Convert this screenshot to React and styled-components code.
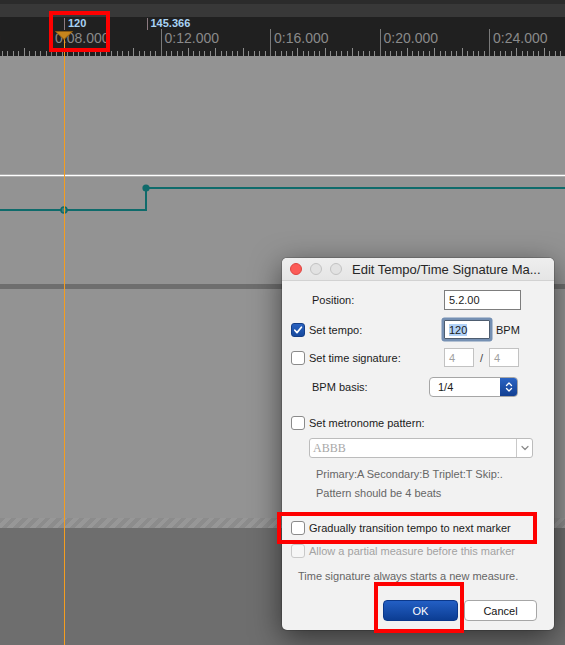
import React from 'react';
import styled, { createGlobalStyle } from 'styled-components';

const Global = createGlobalStyle`
  html, body { margin: 0; padding: 0; background: #6e6e6e; }
  body { font-family: "Liberation Sans", Arial, sans-serif; }
  * { box-sizing: border-box; }
`;

const Screen = styled.div`
  position: relative;
  width: 565px;
  height: 645px;
  overflow: hidden;
  display: flex;
  flex-direction: column;
  background: #6e6e6e;
`;

const TopStrip = styled.div`
  flex: none;
  height: 4px;
  background: #2b2b2b;
`;

const HeaderBar = styled.div`
  flex: none;
  height: 13px;
  background: #383838;
`;

const Ruler = styled.div`
  position: relative;
  flex: none;
  height: 39px;
  background: #202020;
  overflow: hidden;
`;

const RulerTicks = styled.svg`
  position: absolute;
  left: 0;
  top: 0;
`;

const TempoLabel = styled.span`
  position: absolute;
  top: 0;
  line-height: 13px;
  font-size: 11px;
  font-weight: 700;
  color: #a9d3f4;
  white-space: nowrap;
`;

const TimeLabel = styled.span`
  position: absolute;
  top: 14px;
  line-height: 14px;
  font-size: 14px;
  color: #8a8a8a;
  white-space: nowrap;
`;

const Lanes = styled.div`
  flex: 1;
  display: flex;
  flex-direction: column;
`;

const Lane = styled.div`
  position: relative;
  flex: none;
  height: ${p => p.$h}px;
  background: #939393;
`;

const LaneDivider = styled.div`
  flex: none;
  height: 5px;
  background: #6e6e6e;
`;

const Hatch = styled.div`
  flex: none;
  height: 10px;
  background: repeating-linear-gradient(135deg, #8c8c8c 0 4px, #979797 4px 8px);
`;

const BottomArea = styled.div`
  flex: 1;
  background: #6e6e6e;
`;

const Graph = styled.svg`
  position: absolute;
  left: 0;
  top: 0;
`;

const Playhead = styled.div`
  position: absolute;
  left: 63.5px;
  top: 38px;
  bottom: 0;
  width: 1.4px;
  background: #f59d1f;
`;

const PlayheadHandle = styled.svg`
  position: absolute;
  left: 55px;
  top: 31px;
`;

const Dialog = styled.div`
  position: absolute;
  left: 282px;
  top: 258px;
  width: 272px;
  height: 372px;
  background: #f2f2f2;
  border-radius: 5px;
  box-shadow: 0 8px 30px rgba(0, 0, 0, 0.55), 0 0 0 1px rgba(0, 0, 0, 0.15);
  display: flex;
  flex-direction: column;
  overflow: hidden;
  font-family: "Liberation Sans", Arial, sans-serif;
  font-size: 11px;
  color: #1b1b1b;
`;

const TitleBar = styled.div`
  flex: none;
  height: 23px;
  display: flex;
  align-items: center;
  padding-left: 8px;
  background: linear-gradient(#eeeeee, #e5e5e5);
  border-bottom: 1px solid #d2d2d2;
`;

const Light = styled.span`
  flex: none;
  width: 12px;
  height: 12px;
  border-radius: 50%;
  margin-right: 8px;
  background: ${p => (p.$red ? '#fc5b57' : '#e2e2e2')};
  border: 1px solid ${p => (p.$red ? '#dd4440' : '#c2c2c2')};
`;

const Title = styled.span`
  margin-left: 2px;
  font-size: 13px;
  color: #262626;
  white-space: nowrap;
`;

const Body = styled.div`
  flex: 1;
  display: flex;
  flex-direction: column;
`;

const Row = styled.div`
  flex: none;
  display: flex;
  align-items: center;
  height: ${p => p.$h}px;
  margin-top: ${p => p.$mt}px;
  padding-left: ${p => p.$pl || 0}px;
`;

const ButtonRow = styled(Row)`
  justify-content: flex-end;
  padding-right: 17px;
  gap: 6px;
`;

const Label = styled.span`
  flex: none;
  width: ${p => (p.$w ? `${p.$w}px` : 'auto')};
  color: ${p => (p.$disabled ? '#a3a3a3' : '#1b1b1b')};
  white-space: nowrap;
`;

const Hint = styled.span`
  color: #666;
  white-space: nowrap;
`;

const Box = styled.span`
  flex: none;
  width: 14px;
  height: 14px;
  margin-right: 4px;
  border-radius: 3px;
  display: flex;
  align-items: center;
  justify-content: center;
  background: ${p => (p.$checked ? 'linear-gradient(#2a62c0, #174a9f)' : p.$disabled ? '#f6f6f6' : '#fff')};
  border: 1px solid ${p => (p.$checked ? '#153f88' : p.$disabled ? '#c9c9c9' : '#8a8a8a')};
`;

const Field = styled.span`
  flex: none;
  display: flex;
  align-items: center;
  width: ${p => p.$w}px;
  height: ${p => p.$h || 20}px;
  padding-left: 4px;
  background: #fff;
  border: 1px solid ${p => (p.$disabled ? '#c2c2c2' : p.$focus ? '#4e5d70' : '#7d7d7d')};
  color: ${p => (p.$disabled ? '#a0a0a0' : '#1b1b1b')};
  box-shadow: ${p => (p.$focus ? '0 0 0 2.5px #7590b3' : 'none')};
  border-radius: ${p => (p.$focus ? '1px' : '0')};
`;

const Selected = styled.span`
  background: #b2d3f8;
`;

const Unit = styled.span`
  margin-left: 6px;
`;

const Slash = styled.span`
  flex: none;
  width: 15px;
  text-align: center;
  color: #444;
`;

const Select = styled.span`
  flex: none;
  display: flex;
  width: 89px;
  height: 20px;
  border: 1px solid #a6a6a6;
  border-radius: 4px;
  background: #fff;
  overflow: hidden;
`;

const SelectValue = styled.span`
  flex: 1;
  display: flex;
  align-items: center;
  padding-left: 8px;
`;

const Stepper = styled.span`
  flex: none;
  width: 17px;
  display: flex;
  align-items: center;
  justify-content: center;
  background: linear-gradient(#2a63c3, #123f92);
`;

const Combo = styled.span`
  flex: none;
  display: flex;
  width: 224px;
  height: 20px;
  border: 1px solid #bcbcbc;
  border-radius: 3px;
  background: #fff;
`;

const ComboText = styled.span`
  flex: 1;
  display: flex;
  align-items: center;
  padding-left: 3px;
  font-family: "Liberation Serif", "Times New Roman", serif;
  font-size: 12px;
  color: #a7a7a7;
`;

const ComboButton = styled.span`
  flex: none;
  width: 16px;
  display: flex;
  align-items: center;
  justify-content: center;
  border-left: 1px solid #c9c9c9;
`;

const Button = styled.button`
  width: ${p => p.$w}px;
  height: 21px;
  padding: 0;
  border-radius: 4px;
  font-family: "Liberation Sans", Arial, sans-serif;
  font-size: 11px;
  color: ${p => (p.$primary ? '#fff' : '#141414')};
  background: ${p => (p.$primary ? 'linear-gradient(#235fc4, #0c3d93)' : '#fff')};
  border: 1px solid ${p => (p.$primary ? '#0b388a' : '#a6a6a6')};
`;

const Annotation = styled.div`
  position: absolute;
  border: 4px solid #fe0000;
  pointer-events: none;
`;

const majors = [-1, 0, 1, 2, 3, 4].map(i => ({
  x: 51 + 109.5 * i,
  label: `0:${String(8 + 4 * i).padStart(2, '0')}.000`,
}));

const minors = [];
for (let k = -20; k <= 110; k++) {
  if (k % 20 === 0) continue;
  const x = Math.round(51 + k * 5.475) + 0.5;
  minors.push({ x, tall: k % 5 === 0 });
}

const tempos = [
  { x: 64, label: '120' },
  { x: 146.5, label: '145.366' },
];

const annotations = [
  { left: 49, top: 11, width: 61, height: 41 },
  { left: 277, top: 512, width: 260, height: 32 },
  { left: 374, top: 582, width: 90, height: 51 },
];

const Check = () => (
  <svg width="10" height="10" viewBox="0 0 10 10">
    <path d="M1.8 5.2 L4 7.6 L8.4 2.2" fill="none" stroke="#fff" strokeWidth="1.7" strokeLinecap="round" strokeLinejoin="round" />
  </svg>
);

export default function App() {
  return (
    <>
      <Global />
      <Screen>
        <TopStrip />
        <HeaderBar />
        <Ruler>
          <RulerTicks width="565" height="39">
            {tempos.map(t => (
              <line key={t.label} x1={Math.round(t.x) + 0.5} x2={Math.round(t.x) + 0.5} y1="1" y2="13" stroke="#8c7a80" strokeWidth="1" />
            ))}
            {majors.map(m => (
              <line key={m.label} x1={Math.round(m.x) + 0.5} x2={Math.round(m.x) + 0.5} y1="12" y2="39" stroke="#7a7a7a" strokeWidth="1" />
            ))}
            {minors.map(m => (
              <line key={m.x} x1={m.x} x2={m.x} y1={m.tall ? 31 : 34} y2="39" stroke="#8c8c8c" strokeWidth="1" />
            ))}
          </RulerTicks>
          {tempos.map(t => (
            <TempoLabel key={t.label} style={{ left: t.x + 4 }}>{t.label}</TempoLabel>
          ))}
          {majors.map(m => (
            <TimeLabel key={m.label} style={{ left: m.x + 4 }}>{m.label}</TimeLabel>
          ))}
        </Ruler>
        <Lanes>
          <Lane $h={228}>
            <Graph width="565" height="228">
              <line x1="0" x2="565" y1="119.5" y2="119.5" stroke="#ffffff" strokeWidth="1.5" />
              <polyline points="0,154 146,154 146,132 565,132" fill="none" stroke="#0f6b6b" strokeWidth="2" />
              <circle cx="146" cy="132" r="3.6" fill="#0f6b6b" />
              <circle cx="64" cy="154" r="3" fill="#3f8080" stroke="#0f6b6b" strokeWidth="1.6" />
            </Graph>
          </Lane>
          <LaneDivider />
          <Lane $h={229} />
          <Hatch />
          <BottomArea />
        </Lanes>

        <Playhead />
        <PlayheadHandle width="18" height="9" viewBox="0 0 18 9">
          <polygon points="0.5,0.5 17.5,0.5 9,8.5" fill="#c6851d" stroke="#8a5a12" strokeWidth="1" />
        </PlayheadHandle>

        <Dialog>
          <TitleBar>
            <Light $red />
            <Light />
            <Light />
            <Title>Edit Tempo/Time Signature Ma...</Title>
          </TitleBar>
          <Body>
            <Row $mt={9} $h={20} $pl={30}>
              <Label $w={132}>Position:</Label>
              <Field $w={77}>5.2.00</Field>
            </Row>
            <Row $mt={7} $h={25} $pl={9}>
              <Box $checked><Check /></Box>
              <Label $w={135}>Set tempo:</Label>
              <Field $w={46} $h={19} $focus><Selected>120</Selected></Field>
              <Unit>BPM</Unit>
            </Row>
            <Row $mt={6} $h={19} $pl={9}>
              <Box />
              <Label $w={135}>Set time signature:</Label>
              <Field $w={30} $h={19} $disabled>4</Field>
              <Slash>/</Slash>
              <Field $w={30} $h={19} $disabled>4</Field>
            </Row>
            <Row $mt={10} $h={20} $pl={30}>
              <Label $w={117}>BPM basis:</Label>
              <Select>
                <SelectValue>1/4</SelectValue>
                <Stepper>
                  <svg width="8" height="12" viewBox="0 0 8 12">
                    <path d="M1.5 4.5 L4 2 L6.5 4.5 M1.5 7.5 L4 10 L6.5 7.5" fill="none" stroke="#fff" strokeWidth="1.3" strokeLinecap="round" strokeLinejoin="round" />
                  </svg>
                </Stepper>
              </Select>
            </Row>
            <Row $mt={18} $h={15} $pl={9}>
              <Box />
              <Label>Set metronome pattern:</Label>
            </Row>
            <Row $mt={8} $h={20} $pl={27}>
              <Combo>
                <ComboText>ABBB</ComboText>
                <ComboButton>
                  <svg width="8" height="6" viewBox="0 0 8 6">
                    <path d="M1 1.5 L4 4.5 L7 1.5" fill="none" stroke="#8a8a8a" strokeWidth="1.2" strokeLinecap="round" strokeLinejoin="round" />
                  </svg>
                </ComboButton>
              </Combo>
            </Row>
            <Row $mt={9} $h={14} $pl={34}>
              <Hint>Primary:A Secondary:B Triplet:T Skip:.</Hint>
            </Row>
            <Row $mt={5} $h={14} $pl={34}>
              <Hint>Pattern should be 4 beats</Hint>
            </Row>
            <Row $mt={20} $h={15} $pl={9}>
              <Box />
              <Label>Gradually transition tempo to next marker</Label>
            </Row>
            <Row $mt={8} $h={15} $pl={9}>
              <Box $disabled />
              <Label $disabled>Allow a partial measure before this marker</Label>
            </Row>
            <Row $mt={11} $h={14} $pl={16}>
              <Hint>Time signature always starts a new measure.</Hint>
            </Row>
            <ButtonRow $mt={17} $h={21}>
              <Button $primary $w={75}>OK</Button>
              <Button $w={73}>Cancel</Button>
            </ButtonRow>
          </Body>
        </Dialog>

        {annotations.map((a, i) => (
          <Annotation key={i} style={a} />
        ))}
      </Screen>
    </>
  );
}
